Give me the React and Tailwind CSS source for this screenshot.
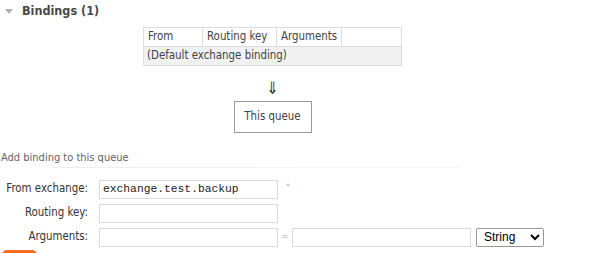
import React from "react";

const font = { fontFamily: '"DejaVu Sans Condensed", "Noto Sans", sans-serif' };

// Form row: right-aligned label + field(s)
const FormRow = ({ label, children }) => (
  <div className="flex items-center h-[24px]">
    <label className="w-[88px] text-right text-[11.4px] text-[#333]">{label}</label>
    <div className="ml-[11px] flex items-center">{children}</div>
  </div>
);

const TextInput = ({ value = "" }) => (
  <input
    readOnly
    value={value}
    className="w-[179px] h-[19px] border border-[#dcdcdc] bg-white px-[3px] text-[11.3px] text-[#222] outline-none"
    style={{ fontFamily: '"Liberation Mono", monospace' }}
  />
);

const App = () => {
  return (
    <div className="w-[610px] h-[253px] overflow-hidden bg-white text-[#444]" style={font}>
      {/* Section header */}
      <div className="flex items-center h-[22px] pl-[5px]">
        <svg width="8" height="5" viewBox="0 0 8 5" className="mt-[1px]">
          <polygon points="0,0 8,0 4,5" fill="#b0b0b0" />
        </svg>
        <h2 className="ml-[9px] text-[12.5px] font-bold text-[#484848]">Bindings (1)</h2>
      </div>

      {/* Bindings table + arrow + queue box */}
      <div className="w-[545px] flex flex-col items-center pt-[5px]">
        <table className="w-[259px] border-collapse text-[11.4px] text-[#444]">
          <thead>
            <tr className="h-[19px] bg-white">
              <th className="w-[59px] border border-[#ddd] px-[4px] text-left font-normal">From</th>
              <th className="w-[74px] border border-[#ddd] px-[4px] text-left font-normal">Routing key</th>
              <th className="w-[64px] border border-[#ddd] px-[4px] text-left font-normal">Arguments</th>
              <th className="border border-[#ddd]"></th>
            </tr>
          </thead>
          <tbody>
            <tr className="h-[19px] bg-[#f1f1f1]">
              <td colSpan={4} className="border border-[#ddd] px-[3px]">
                (Default exchange binding)
              </td>
            </tr>
          </tbody>
        </table>

        <div className="mt-[14px] h-[16px] text-[17px] leading-none text-[#333]">⇓</div>

        <div className="mt-[5px] w-[78px] h-[32px] border border-[#999] flex items-center justify-center text-[11.4px] text-[#444]">
          This queue
        </div>
      </div>

      {/* Add binding form */}
      <div className="mt-[18px]">
        <div className="pl-[1px] text-[11px] text-[#666] leading-[14px]">Add binding to this queue</div>
        <div className="ml-[53px] w-[407px] h-[1px] mt-[2px] bg-gradient-to-r from-[#eee] to-[#f7f7f7]"></div>
      </div>

      <div className="mt-[9px] flex flex-col">
        <FormRow label="From exchange:">
          <TextInput value="exchange.test.backup" />
          <span className="ml-[8px] text-[9px] text-[#f4a4a4] leading-none -mt-[4px]">*</span>
        </FormRow>
        <FormRow label="Routing key:">
          <TextInput />
        </FormRow>
        <FormRow label="Arguments:">
          <TextInput />
          <span className="w-[14px] text-center text-[9px] text-[#999]">=</span>
          <TextInput />
          <select
            className="ml-[5px] w-[68px] h-[19px] border border-[#999] rounded-[2px] bg-white text-[12px] text-black pl-[3px]"
            style={{ fontFamily: '"Liberation Sans", Arial, sans-serif' }}
            defaultValue="String"
          >
            <option>String</option>
            <option>Number</option>
            <option>Boolean</option>
          </select>
        </FormRow>
      </div>

      {/* Submit button, cut off by the viewport */}
      <div className="mt-[1px] ml-[2px] w-[35px] h-[20px] rounded-[5px] bg-[#f26d21]"></div>
    </div>
  );
};

export default App;
